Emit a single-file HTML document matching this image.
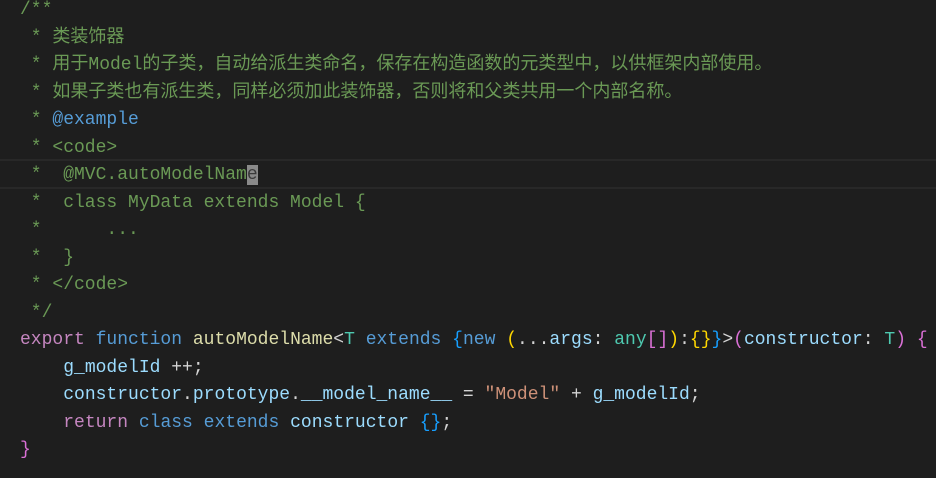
<!DOCTYPE html>
<html><head><meta charset="utf-8"><style>
html,body{margin:0;padding:0;background:#1e1e1e;width:936px;height:478px;overflow:hidden}
.code{position:absolute;left:20px;top:-3px;font-family:"Liberation Mono","Noto Sans CJK SC",monospace;font-size:18px;line-height:27.5px;color:#d4d4d4;white-space:pre}
.hl{position:absolute;left:0;top:159px;width:936px;height:26px;border-top:2px solid #282828;border-bottom:2px solid #282828}
.c{color:#6a9955}.k{color:#569cd6}.p{color:#c586c0}.f{color:#dcdcaa}.t{color:#4ec9b0}.v{color:#9cdcfe}.s{color:#ce9178}
.g{color:#ffd700}.o{color:#da70d6}.b{color:#179fff}
.cur{background:#8a8a8a;color:#3a3a3a}
</style></head><body>
<div class="hl"></div>
<div class="code"><span class="c">/**
 * 类装饰器
 * 用于Model的子类，自动给派生类命名，保存在构造函数的元类型中，以供框架内部使用。
 * 如果子类也有派生类，同样必须加此装饰器，否则将和父类共用一个内部名称。
 * </span><span class="k">@example</span><span class="c">
 * &lt;code&gt;
 *  @MVC.autoModelNam<span class="cur">e</span>
 *  class MyData extends Model {
 *      ...
 *  }
 * &lt;/code&gt;
 */</span>
<span class="p">export</span> <span class="k">function</span> <span class="f">autoModelName</span>&lt;<span class="t">T</span> <span class="k">extends</span> <span class="b">{</span><span class="k">new</span> <span class="g">(</span>...<span class="v">args</span>: <span class="t">any</span><span class="o">[]</span><span class="g">)</span>:<span class="g">{}</span><span class="b">}</span>&gt;<span class="o">(</span><span class="v">constructor</span>: <span class="t">T</span><span class="o">)</span> <span class="o">{</span>
    <span class="v">g_modelId</span> ++;
    <span class="v">constructor</span>.<span class="v">prototype</span>.<span class="v">__model_name__</span> = <span class="s">"Model"</span> + <span class="v">g_modelId</span>;
    <span class="p">return</span> <span class="k">class</span> <span class="k">extends</span> <span class="v">constructor</span> <span class="b">{}</span>;
<span class="o">}</span></div>
</body></html>
